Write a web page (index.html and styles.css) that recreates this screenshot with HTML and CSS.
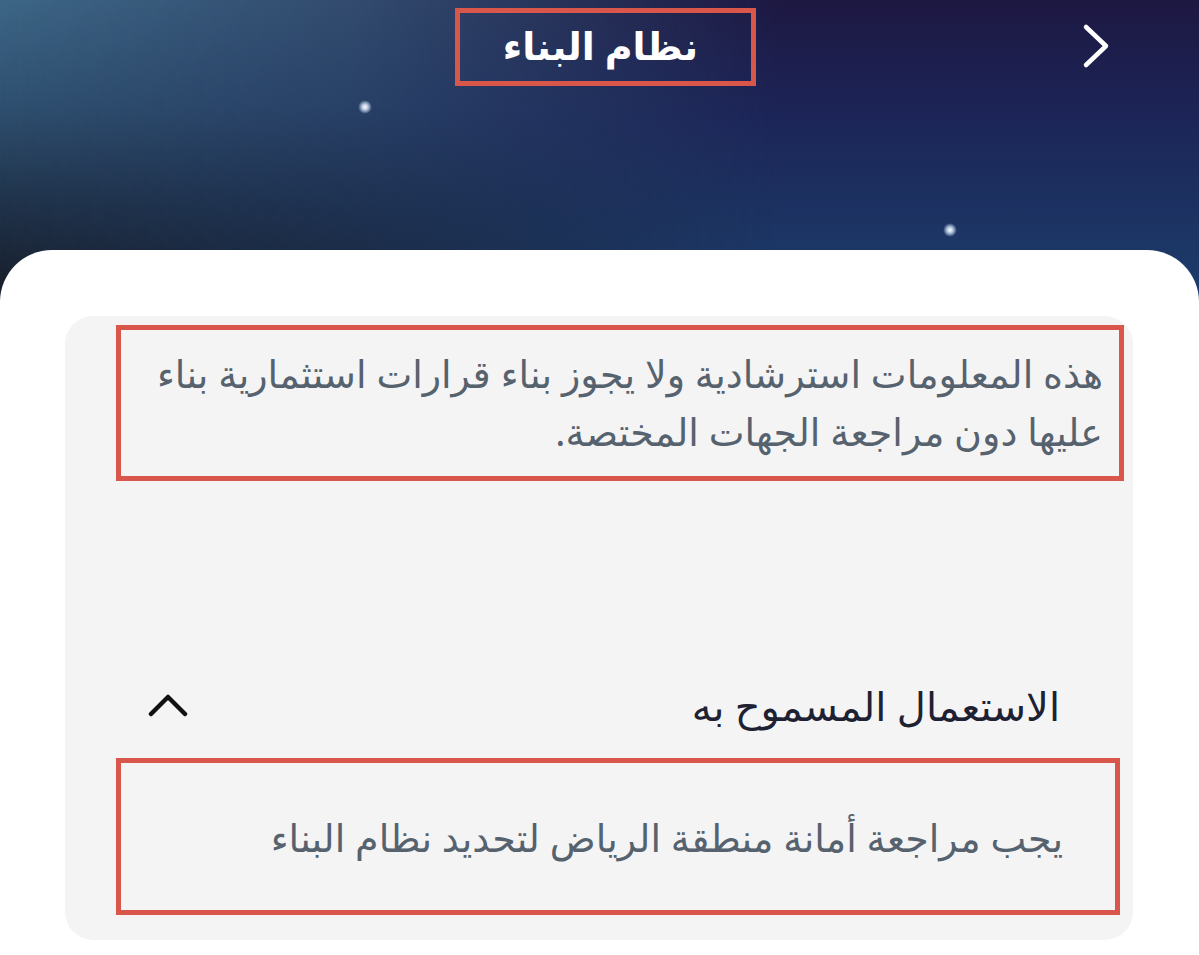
FILE: index.html
```html
<!DOCTYPE html>
<html lang="ar" dir="rtl">
	<head>
		<meta charset="UTF-8">
		<title>نظام البناء</title>
		<link rel="stylesheet" href="styles.css">
	</head>
	<body>
		<div class="screen">
			<div class="top-bar">
				<a class="back" href="#">
					<svg width="28" height="46" viewBox="0 0 28 46">
						<path d="M4 4 L24 23 L4 42" fill="none" stroke="#fff" stroke-width="4.5" stroke-linecap="round" stroke-linejoin="round"/>
					</svg>
				</a>
				<h1 class="title mark">نظام البناء</h1>
				<span></span>
				<i class="star star-a"></i>
				<i class="star star-b"></i>
			</div>

			<div class="sheet">
				<div class="card">
					<p class="note mark">هذه المعلومات استرشادية ولا يجوز بناء قرارات استثمارية بناء عليها دون مراجعة الجهات المختصة.</p>

					<div class="section-head">
						<h2>الاستعمال المسموح به</h2>
						<svg width="40" height="26" viewBox="0 0 40 26">
							<path d="M3 22 L20 5 L37 22" fill="none" stroke="#111" stroke-width="4.5" stroke-linecap="round" stroke-linejoin="round"/>
						</svg>
					</div>

					<div class="section-body mark">
						<p>يجب مراجعة أمانة منطقة الرياض لتحديد نظام البناء</p>
					</div>
				</div>
			</div>
		</div>
	</body>
</html>
```

FILE: styles.css
```css
* {
	margin: 0;
	padding: 0;
	box-sizing: border-box;
}
html, body {
	width: 1199px;
	height: 955px;
	overflow: hidden;
	background: #fff;
}
body {
	font-family: "Noto Sans", "DejaVu Sans", sans-serif;
}
.screen {
	position: relative;
	height: 955px;
	/* left half: steel blue at top, near black at the bottom */
	background: linear-gradient(180deg, #3d6686 0%, #2f5070 35%, #1f3148 70%, #181d29 100%);
	background-repeat: no-repeat;
	background-size: 100% 300px;
}
/* right half: deep indigo at top, brighter blue at the bottom */
.screen::before {
	content: '';
	position: absolute;
	left: 0;
	top: 0;
	width: 100%;
	height: 300px;
	background: linear-gradient(180deg, #1d1842 0%, #1c2558 40%, #1c3463 75%, #1c3c6c 100%);
	-webkit-mask-image: linear-gradient(90deg, transparent 0%, rgba(0,0,0,0.35) 30%, #000 65%);
	mask-image: linear-gradient(90deg, transparent 0%, rgba(0,0,0,0.35) 30%, #000 65%);
}

/* top bar */
.top-bar {
	position: relative;
	z-index: 1;
	height: 250px;
	display: grid;
	grid-template-columns: 1fr auto 1fr;
	align-items: start;
}
.back {
	justify-self: start;
	margin-right: 89px;
	margin-top: 23px;
	display: block;
	line-height: 0;
}
.mark {
	border: 5px solid #d9574a;
}
.title {
	margin-top: 8px;
	margin-left: 12px;
	width: 301px;
	height: 78px;
	padding-right: 10px;
	color: #fff;
	font-size: 38px;
	font-weight: bold;
	text-align: center;
	line-height: 64px;
}
.star {
	position: absolute;
	width: 14px;
	height: 14px;
	border-radius: 50%;
	background: radial-gradient(circle, #fff 0%, rgba(220,235,255,0.8) 30%, rgba(160,190,230,0) 70%);
}
.star-a { left: 358px; top: 100px; }
.star-b { left: 943px; top: 223px; }

/* white sheet */
.sheet {
	position: relative;
	z-index: 1;
	height: 705px;
	background: #fff;
	border-radius: 52px 52px 0 0;
	padding: 66px 66px 0 65px;
}
.card {
	height: 624px;
	background: #f4f4f5;
	border-radius: 28px;
	padding: 9px 9px 0 51px;
}
.note {
	height: 156px;
	padding: 14px 16px 0 10px;
	color: #56626e;
	font-size: 38px;
	line-height: 58px;
}
.section-head {
	margin-top: 196px;
	display: flex;
	justify-content: space-between;
	align-items: center;
	padding: 0 64px 0 32px;
	height: 56px;
}
.section-head h2 {
	font-size: 40px;
	font-weight: normal;
	color: #1d2132;
}
.section-body {
	margin-top: 25px;
	margin-right: 4px;
	height: 157px;
	display: flex;
	align-items: center;
	padding-right: 52px;
	color: #56626e;
	font-size: 38px;
}
```
